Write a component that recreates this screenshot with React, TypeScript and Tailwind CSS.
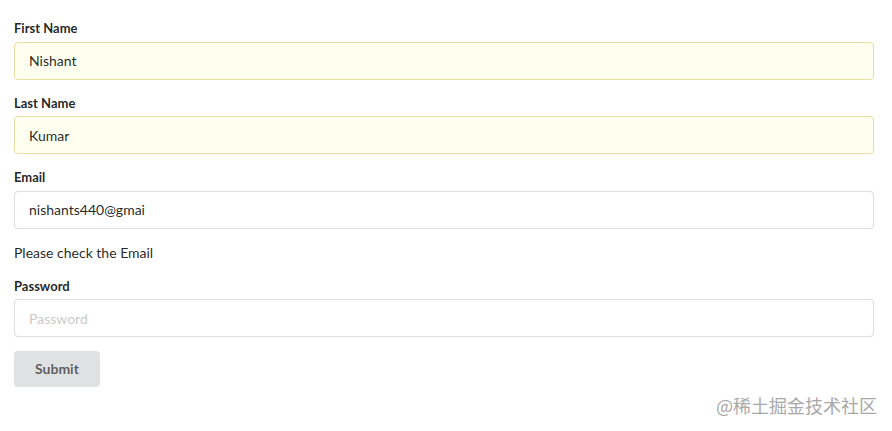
const fieldInput =
  'block w-full h-[38px] rounded-[4px] border px-[14px] text-[14px] leading-[17px] text-[rgba(0,0,0,0.87)] outline-none placeholder:text-[rgba(191,191,191,0.87)]'

function Field({ label, value, placeholder, filled }: { label: string; value?: string; placeholder?: string; filled?: boolean }) {
  return (
    <div className="mb-[14px]">
      <label className="block mb-[4px] text-[13px] leading-[18.5px] font-bold text-[rgba(0,0,0,0.87)]">{label}</label>
      <input
        readOnly
        value={value ?? ''}
        placeholder={placeholder}
        className={
          fieldInput +
          (filled ? ' bg-[#fffff0] border-[#e5dfa1]' : ' bg-white border-[rgba(34,36,38,0.15)]')
        }
      />
    </div>
  )
}

export default function App() {
  return (
    <div className="relative w-[892px] h-[431px] bg-white font-['Lato','Liberation_Sans',sans-serif] text-[14px] leading-[20px] text-[rgba(0,0,0,0.87)]">
      <form className="pl-[14px] pr-[18px] pt-[19px]" onSubmit={e => e.preventDefault()}>
        <Field label="First Name" value="Nishant" filled />
        <Field label="Last Name" value="Kumar" filled />
        <Field label="Email" value="nishants440@gmai" />
        <p className="mb-[14px]">Please check the Email</p>
        <Field label="Password" placeholder="Password" />
        <button
          type="submit"
          className="h-[36px] px-[21px] rounded-[4px] bg-[#e0e1e2] text-[14px] leading-[14px] font-bold text-[rgba(0,0,0,0.6)]"
        >
          Submit
        </button>
      </form>

      {/* watermark */}
      <div className="absolute right-[15px] bottom-[16px] text-[18px] leading-[20px] text-[#a8a8a8] font-['Noto_Sans_CJK_SC',sans-serif]">
        @稀土掘金技术社区
      </div>
    </div>
  )
}
